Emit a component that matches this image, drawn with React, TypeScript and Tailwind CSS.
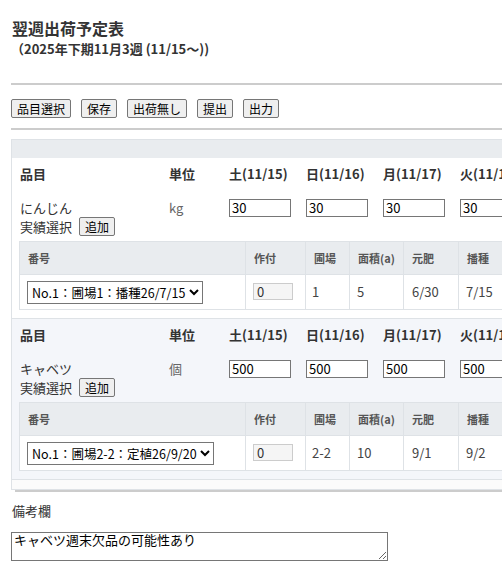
import React from 'react';

const days = ['土(11/15)', '日(11/16)', '月(11/17)', '火(11/18)', '水(11/19)', '木(11/20)', '金(11/21)'];

type Item = {
  name: string;
  unit: string;
  qty: string;
  option: string;
  field: string;
  area: string;
  base: string;
  sow: string;
  striped: boolean;
};

const items: Item[] = [
  { name: 'にんじん', unit: 'kg', qty: '30', option: 'No.1：圃場1：播種26/7/15', field: '1', area: '5', base: '6/30', sow: '7/15', striped: false },
  { name: 'キャベツ', unit: '個', qty: '500', option: 'No.1：圃場2-2：定植26/9/20', field: '2-2', area: '10', base: '9/1', sow: '9/2', striped: true },
];

const btn = 'border border-[#767676] bg-[#efefef] rounded-[2px] px-[5px] py-px text-[12px] leading-[15px] text-black';

function ItemSection({ item }: { item: Item }) {
  return (
    <div className={(item.striped ? 'bg-[#f4f6fa]' : 'bg-white') + ' border-b border-[#dee2e6] px-[7px] pt-[6px] pb-[8px]'}>
      <div className="grid grid-cols-[150px_60px_repeat(7,77px)] h-[20px] items-center font-bold text-[13px]">
        <div className="pl-px">品目</div>
        <div>単位</div>
        {days.map(d => <div key={d}>{d}</div>)}
      </div>
      <div className="mt-[14px] grid grid-cols-[150px_60px_repeat(7,77px)] h-[18px] items-center text-[13px]">
        <div className="pl-px">{item.name}</div>
        <div className="text-[#666]">{item.unit}</div>
        {days.map(d => (
          <div key={d}>
            <input
              className="w-[62px] h-[18px] border border-[#767676] bg-white px-[2px] text-[13px] leading-[16px] text-black"
              defaultValue={item.qty}
            />
          </div>
        ))}
      </div>
      <div className="mt-px flex items-center gap-[7px] h-[19px] text-[13px] pl-px">
        <span>実績選択</span>
        <button className={btn}>追加</button>
      </div>
      <table className="mt-[5px] table-fixed border-collapse border border-[#dee2e6] w-[600px] text-[13px]">
        <thead>
          <tr className="bg-[#e9ecef] text-[11px] font-semibold text-[#555]">
            <th className="w-[226px] h-[33px] border border-[#dee2e6] px-2 text-left font-semibold">番号</th>
            <th className="w-[60px] border border-[#dee2e6] px-2 text-left font-semibold">作付</th>
            <th className="w-[44px] border border-[#dee2e6] px-2 text-left font-semibold">圃場</th>
            <th className="w-[54px] border border-[#dee2e6] px-2 text-left font-semibold">面積(a)</th>
            <th className="w-[55px] border border-[#dee2e6] px-2 text-left font-semibold">元肥</th>
            <th className="w-[55px] border border-[#dee2e6] px-2 text-left font-semibold">播種</th>
            <th className="border border-[#dee2e6] px-2 text-left font-semibold">定植</th>
          </tr>
        </thead>
        <tbody>
          <tr className="bg-white text-[#444]">
            <td className="h-[35px] border border-[#dee2e6] px-[7px]">
              <select className="border border-[#767676] bg-white py-0 text-[12.5px] leading-[12px] text-black" defaultValue="1">
                <option value="1">{item.option}</option>
              </select>
            </td>
            <td className="border border-[#dee2e6] px-[7px]">
              <input readOnly value="0" className="w-[40px] h-[17px] border border-[#cccccc] bg-[#f5f5f5] px-[3px] text-[13px] leading-[15px] text-[#333]" />
            </td>
            <td className="border border-[#dee2e6] px-[6px]">{item.field}</td>
            <td className="border border-[#dee2e6] px-[7px]">{item.area}</td>
            <td className="border border-[#dee2e6] px-[8px]">{item.base}</td>
            <td className="border border-[#dee2e6] px-[7px]">{item.sow}</td>
            <td className="border border-[#dee2e6] px-[7px]"></td>
          </tr>
        </tbody>
      </table>
    </div>
  );
}

export default function App() {
  return (
    <div className="w-[502px] h-[580px] overflow-hidden bg-white text-[#333] font-['Noto_Sans_CJK_JP','Noto_Sans',sans-serif]">
      <div className="w-[900px] pl-[11px] pt-[17px]">
        <h1 className="text-[16px] leading-[22px] font-bold pl-px">翌週出荷予定表</h1>
        <div className="text-[13px] leading-[20px] font-bold">（2025年下期11月3週 (11/15～))</div>
        <div className="mt-[24px] h-[2px] bg-[#cccccc]" />
        <div className="mt-[14px] flex gap-[10px]">
          <button className={btn}>品目選択</button>
          <button className={btn}>保存</button>
          <button className={btn}>出荷無し</button>
          <button className={btn}>提出</button>
          <button className={btn}>出力</button>
        </div>
        <div className="mt-[10px] h-[2px] bg-[#cccccc]" />
        <div className="mt-[9px] w-[760px] border border-[#dee2e6] bg-[#fbfbfb] pb-[9px]">
          <div className="h-[18px] bg-[#e9ecef]" />
          {items.map(it => <ItemSection key={it.name} item={it} />)}
        </div>
        <div className="ml-[4px] h-[2px] bg-[#cccccc]" />
        <div className="mt-[9px] text-[13px] leading-[20px] pl-px">備考欄</div>
        <textarea
          className="mt-[11px] block w-[377px] h-[29px] border border-[#767676] bg-white px-[2px] py-0 text-[13px] leading-[14px] text-black"
          defaultValue="キャベツ週末欠品の可能性あり"
        />
      </div>
    </div>
  );
}
